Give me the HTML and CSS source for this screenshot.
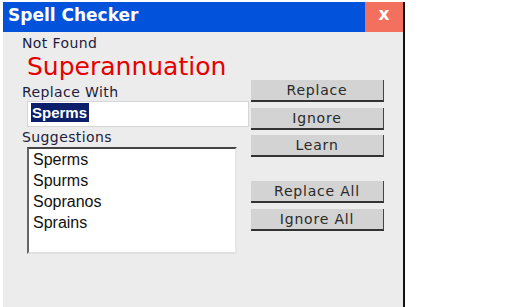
FILE: index.html
```html
<!DOCTYPE html>
<html>
<head>
  <title>Spell Checker</title>
  <link rel="stylesheet" href="styles.css">
</head>
<body>
  <div class="dialog">
    <div class="titlebar">
      <span class="title">Spell Checker</span>
      <span class="close">x</span>
    </div>
    <div class="content">
      <div class="left">
        <div class="label">Not Found</div>
        <div class="word">Superannuation</div>
        <div class="label">Replace With</div>
        <div class="input"><span class="selected">Sperms</span></div>
        <div class="label">Suggestions</div>
        <div class="list">
          <div>Sperms</div>
          <div>Spurms</div>
          <div>Sopranos</div>
          <div>Sprains</div>
        </div>
      </div>
      <div class="buttons">
        <div class="btn">Replace</div>
        <div class="btn">Ignore</div>
        <div class="btn">Learn</div>
        <div class="btn gap">Replace All</div>
        <div class="btn">Ignore All</div>
      </div>
    </div>
  </div>
</body>
</html>
```

FILE: styles.css
```css
html, body {
  margin: 0;
  padding: 0;
  background: #fff;
  font-family: "DejaVu Sans", sans-serif;
  overflow: hidden;
}
.dialog {
  width: 400px;
  height: 305px;
  margin: 2px 0 0 3px;
  background: #ececec;
  border-right: 2px solid #111;
}
.titlebar {
  height: 30px;
  display: flex;
  background: #0252dc;
}
.title {
  flex: 1;
  padding-left: 5px;
  color: #fff;
  font-weight: bold;
  font-size: 17px;
  line-height: 26px;
}
.close {
  width: 38px;
  background: #f4705e;
  color: #fff;
  font-weight: bold;
  font-size: 17px;
  line-height: 24px;
  text-align: center;
}
.content {
  display: flex;
  padding-left: 19px;
}
.left {
  width: 227px;
}
.label {
  font-size: 14px;
  letter-spacing: 0.4px;
  color: #1c1c3c;
  line-height: 16px;
}
.label:first-child {
  margin-top: 3px;
}
.word {
  color: #e60000;
  font-size: 25px;
  line-height: 34px;
  padding-left: 5px;
  margin-top: -1px;
}
.input {
  margin: 1px 0 2px 5px;
  height: 22px;
  background: #fff;
  border: 1px solid #d6d6d6;
  padding: 1px 3px;
}
.selected {
  display: inline-block;
  background: #0c1f6a;
  color: #fff;
  font-family: "Liberation Sans", sans-serif;
  font-size: 15px;
  font-weight: bold;
  line-height: 19px;
  padding: 0 2px 0 1px;
}
.list {
  margin: 2px 0 0 5px;
  width: 206px;
  height: 103px;
  background: #fff;
  border: 2px solid;
  border-color: #444 #e6e6e6 #e0e0e0 #666;
  font-family: "Liberation Sans", sans-serif;
  font-size: 16px;
  line-height: 21px;
  color: #111;
}
.list div {
  padding-left: 4px;
}
.buttons {
  margin-left: 2px;
  padding-top: 48px;
  display: flex;
  flex-direction: column;
  gap: 5px;
}
.btn {
  width: 132px;
  height: 20px;
  background: #d3d3d3;
  border-right: 1px solid #444;
  border-bottom: 2px solid #333;
  color: #2a2a2a;
  font-size: 14px;
  letter-spacing: 0.8px;
  line-height: 21px;
  text-align: center;
}
.btn + .btn {
  margin-top: 0.5px;
}
.btn.gap {
  margin-top: 19px;
}
```
